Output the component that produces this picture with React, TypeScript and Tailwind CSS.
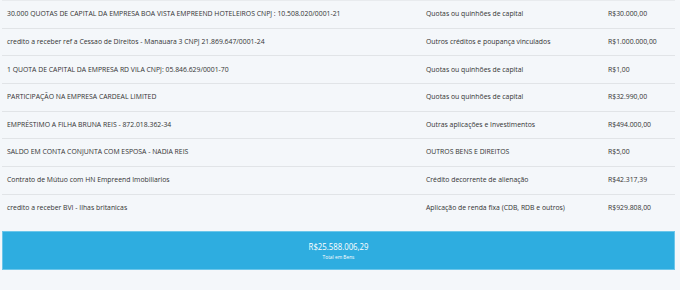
import React from "react";

const rows = [
  ["30.000 QUOTAS DE CAPITAL DA EMPRESA BOA VISTA EMPREEND HOTELEIROS CNPJ : 10.508.020/0001-21", "Quotas ou quinhões de capital", "R$30.000,00"],
  ["credito a receber ref a Cessao de Direitos - Manauara 3 CNPJ 21.869.647/0001-24", "Outros créditos e poupança vinculados", "R$1.000.000,00"],
  ["1 QUOTA DE CAPITAL DA EMPRESA RD VILA CNPJ: 05.846.629/0001-70", "Quotas ou quinhões de capital", "R$1,00"],
  ["PARTICIPAÇÃO NA EMPRESA CARDEAL LIMITED", "Quotas ou quinhões de capital", "R$32.990,00"],
  ["EMPRÉSTIMO A FILHA BRUNA REIS - 872.018.362-34", "Outras aplicações e Investimentos", "R$494.000,00"],
  ["SALDO EM CONTA CONJUNTA COM ESPOSA - NADIA REIS", "OUTROS BENS E DIREITOS", "R$5,00"],
  ["Contrato de Mútuo com HN Empreend Imobiliarios", "Crédito decorrente de alienação", "R$42.317,39"],
  ["credito a receber BVI - Ilhas britanicas", "Aplicação de renda fixa (CDB, RDB e outros)", "R$929.808,00"],
];

export default function App() {
  return (
    <div
      className="w-[680px] h-[290px] bg-[#f4f7fa] text-[#333] overflow-hidden"
      style={{ fontFamily: '"Open Sans", "Noto Sans", sans-serif' }}
    >
      <div className="pl-[2px] pr-[5px]">
        <div className="border-t border-[#e8ebee]">
          {rows.map((r, i) => (
            <div
              key={i}
              className={`flex items-center h-[27.67px] text-[6.85px] ${i < rows.length - 1 ? "border-b border-[#e1e4e7]" : ""}`}
            >
              <div className="w-[417px] pl-[5px] whitespace-nowrap">{r[0]}</div>
              <div className="w-[186px] pl-[7px] whitespace-nowrap">{r[1]}</div>
              <div className="flex-1 pl-[3px] whitespace-nowrap">{r[2]}</div>
            </div>
          ))}
        </div>
        <div className="mt-[9px] h-[39px] bg-[#2eade0] border border-[#6cc6ea] flex flex-col items-center justify-center text-white">
          <div className="text-[9.5px] leading-[12px] scale-x-[0.82]">R$25.588.006,29</div>
          <div className="text-[4.8px] leading-[8px]">Total em Bens</div>
        </div>
      </div>
    </div>
  );
}
